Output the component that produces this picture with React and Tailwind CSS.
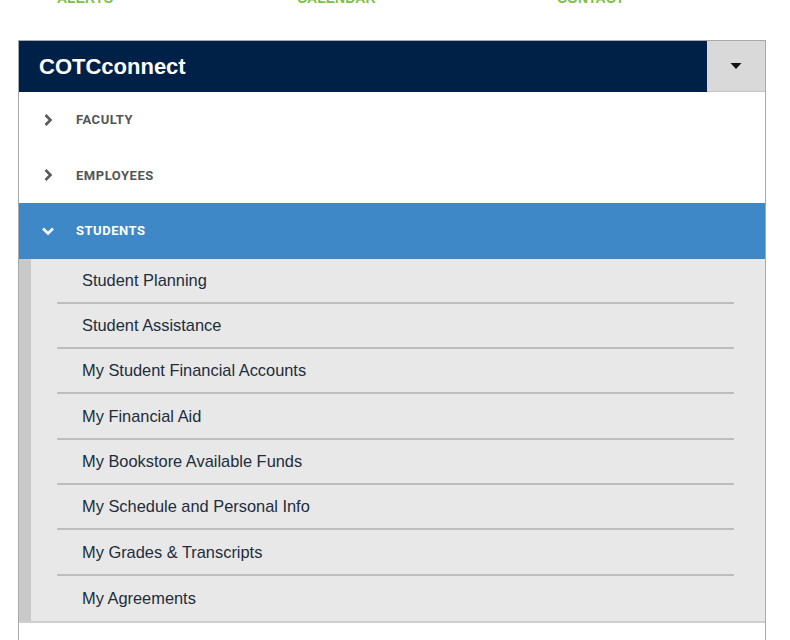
import React from 'react';

const sections = [
  { label: 'FACULTY', open: false },
  { label: 'EMPLOYEES', open: false },
  { label: 'STUDENTS', open: true },
];

const studentLinks = [
  'Student Planning',
  'Student Assistance',
  'My Student Financial Accounts',
  'My Financial Aid',
  'My Bookstore Available Funds',
  'My Schedule and Personal Info',
  'My Grades & Transcripts',
  'My Agreements',
];

const Chevron = ({ open }) => (
  <svg width="14" height="14" viewBox="0 0 14 14" className="shrink-0">
    {open ? (
      <path d="M2 4.5 L7 9.5 L12 4.5" fill="none" stroke="#ffffff" strokeWidth="2.6" />
    ) : (
      <path d="M4.5 2 L9.5 7 L4.5 12" fill="none" stroke="#5a5a5a" strokeWidth="2.6" />
    )}
  </svg>
);

export default function App() {
  return (
    <div className="w-[790px] h-[640px] overflow-hidden bg-white" style={{ fontFamily: '"Liberation Sans", Arial, sans-serif' }}>
      {/* top nav, cut off by the crop */}
      <div className="h-[4px] overflow-hidden">
        <div className="flex -mt-[12px] text-[14px] font-bold text-[#7ac143]">
          <span className="ml-[57px] w-[240px]">ALERTS</span>
          <span className="w-[260px]">CALENDAR</span>
          <span>CONTACT</span>
        </div>
      </div>

      <div className="pt-[36px] pl-[18px]">
        <div className="w-[748px] border border-[#a9a9a9] border-b-0">
          {/* header */}
          <div className="flex h-[51px] bg-[#002147]">
            <div className="flex-1 flex items-center pl-[20px] text-white text-[22px] font-bold">COTCconnect</div>
            <div className="w-[58px] flex items-center justify-center bg-[#d9d9d9] border-b border-[#c4c4c4]">
              <svg width="12" height="8" viewBox="0 0 12 8">
                <path d="M0.5 1 L11.5 1 L6 7 Z" fill="#111" />
              </svg>
            </div>
          </div>

          {sections.map((s) => (
            <div key={s.label}>
              <div
                className={`flex items-center h-[55.5px] pl-[22px] gap-[21px] ${s.open ? 'bg-[#3e88c8]' : 'bg-white'}`}
              >
                <Chevron open={s.open} />
                <span
                  className={`text-[13px] font-bold tracking-[0.04em] ${s.open ? 'text-white' : 'text-[#555]'}`}
                  style={{ fontFamily: 'Roboto, "DejaVu Sans", sans-serif' }}
                >
                  {s.label}
                </span>
              </div>
              {s.open && (
                <div className="flex bg-[#e8e8e8] border-b-2 border-[#cfcfcf]">
                  <div className="w-[12px] bg-[#c9c9c9]" />
                  <div className="flex-1 pl-[26px] pr-[31px]">
                    {studentLinks.map((l, i) => (
                      <div
                        key={l}
                        className={`flex items-center h-[45.3px] pl-[25px] text-[16.4px] text-[#222c3c] ${i < studentLinks.length - 1 ? 'border-b-2 border-[#bdbdbd]' : ''}`}
                      >
                        {l}
                      </div>
                    ))}
                  </div>
                </div>
              )}
            </div>
          ))}
          <div className="h-[56px] bg-white" />
        </div>
      </div>
    </div>
  );
}
